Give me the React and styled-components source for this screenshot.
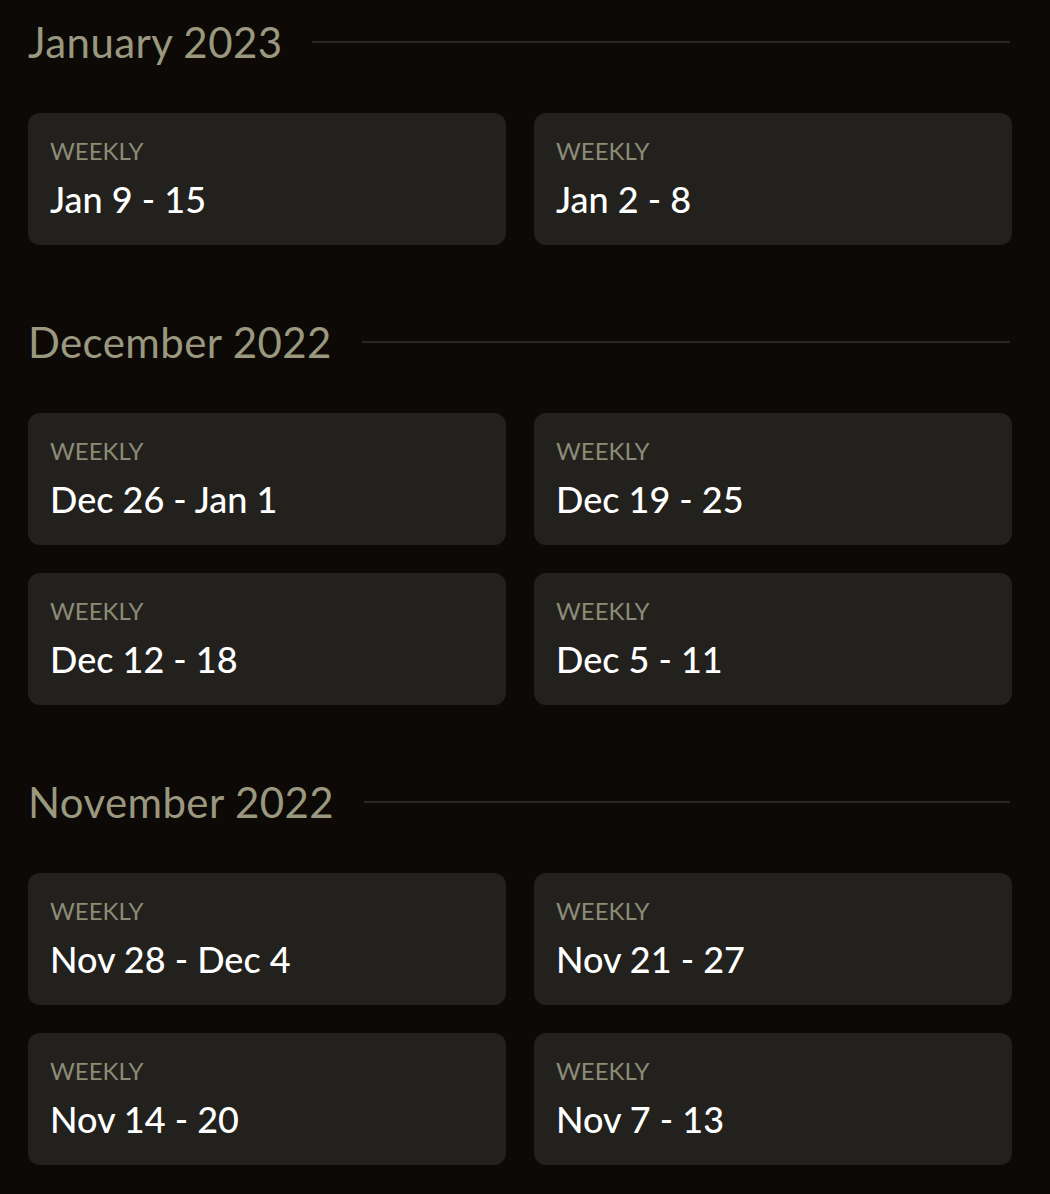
import React from "react";
import styled, { createGlobalStyle } from "styled-components";

const GlobalStyle = createGlobalStyle`
  html, body {
    margin: 0;
    padding: 0;
    background: #0c0907;
  }
  body {
    font-family: Lato, "Noto Sans", sans-serif;
  }
`;

const months = [
  { title: "January 2023", weeks: ["Jan 9 - 15", "Jan 2 - 8"] },
  {
    title: "December 2022",
    weeks: ["Dec 26 - Jan 1", "Dec 19 - 25", "Dec 12 - 18", "Dec 5 - 11"],
  },
  {
    title: "November 2022",
    weeks: ["Nov 28 - Dec 4", "Nov 21 - 27", "Nov 14 - 20", "Nov 7 - 13"],
  },
];

const App = () => {
  return (
    <>
      <GlobalStyle />
      <Page>
        {months.map((month) => (
          <Section key={month.title}>
            <Header>
              <Title>{month.title}</Title>
              <Rule />
            </Header>
            <Grid>
              {month.weeks.map((week) => (
                <Card key={week}>
                  <Label>WEEKLY</Label>
                  <Range>{week}</Range>
                </Card>
              ))}
            </Grid>
          </Section>
        ))}
      </Page>
    </>
  );
};

export default App;

const Page = styled.div`
  width: 984px;
  padding: 17px 0 0 28px;
  display: flex;
  flex-direction: column;
  gap: 72px;
`;

const Section = styled.section`
  display: flex;
  flex-direction: column;
  gap: 46px;
`;

const Header = styled.div`
  display: flex;
  align-items: center;
  gap: 30px;
  padding-right: 2px;
`;

const Title = styled.h2`
  margin: 0;
  font-size: 42px;
  line-height: 50px;
  font-weight: 400;
  color: #9a987f;
  white-space: nowrap;
  letter-spacing: 0.4px;
`;

const Rule = styled.div`
  flex: 1;
  height: 2px;
  background: #2a2622;
`;

const Grid = styled.div`
  display: grid;
  grid-template-columns: 1fr 1fr;
  gap: 28px;
`;

const Card = styled.div`
  background: #22211e;
  border-radius: 12px;
  padding: 26px 22px 28px;
  display: flex;
  flex-direction: column;
  gap: 18px;
`;

const Label = styled.span`
  font-size: 24px;
  line-height: 24px;
  font-weight: 400;
  color: #8c8b75;
`;

const Range = styled.span`
  font-size: 36px;
  line-height: 36px;
  font-weight: 500;
  color: #ffffff;
`;
